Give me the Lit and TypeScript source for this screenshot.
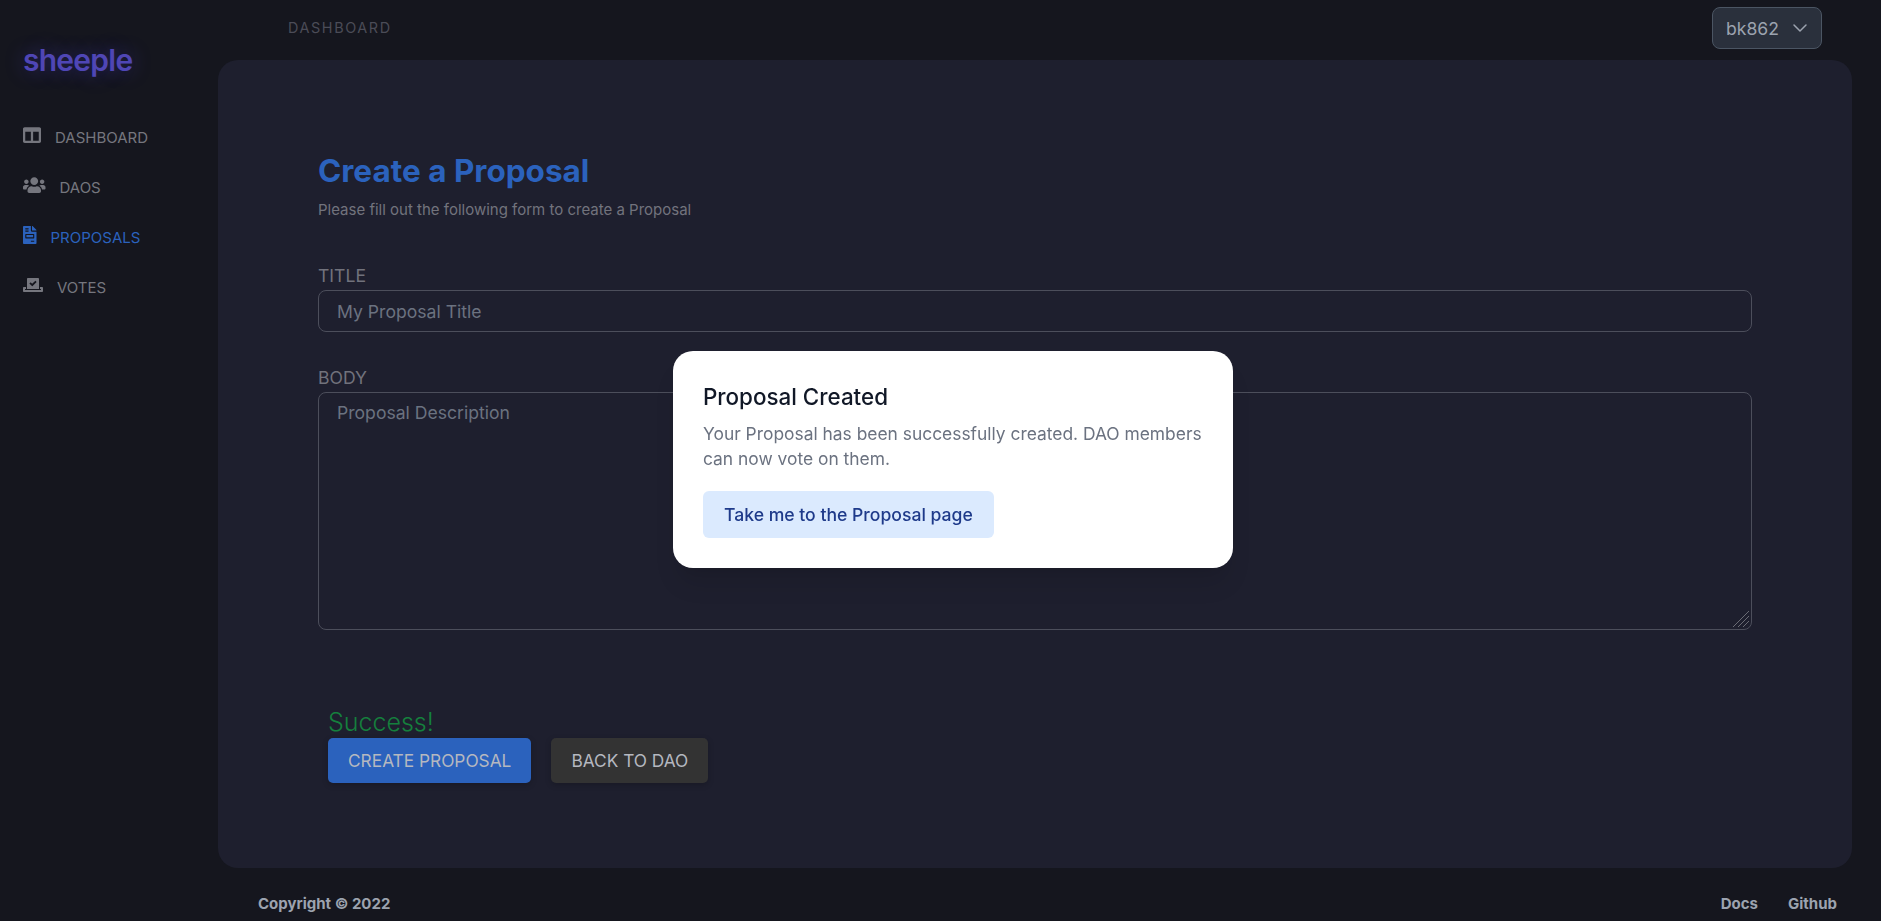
import { LitElement, html, css, svg } from 'lit';
import { customElement } from 'lit/decorators.js';

const ICONS = {
  columns: { box: '0 0 512 512', d: 'M464 32H48C21.49 32 0 53.49 0 80v352c0 26.51 21.49 48 48 48h416c26.51 0 48-21.49 48-48V80c0-26.51-21.49-48-48-48zM224 416H64V160h160v256zm224 0H288V160h160v256z' },
  users: { box: '0 0 640 512', d: 'M96 224c35.3 0 64-28.7 64-64s-28.7-64-64-64-64 28.7-64 64 28.7 64 64 64zm448 0c35.3 0 64-28.7 64-64s-28.7-64-64-64-64 28.7-64 64 28.7 64 64 64zm32 32h-64c-17.6 0-33.5 7.1-45.1 18.6 40.3 22.1 68.9 62 75.1 109.4h66c17.7 0 32-14.3 32-32v-32c0-35.3-28.7-64-64-64zm-256 0c61.9 0 112-50.1 112-112S381.9 32 320 32 208 82.1 208 144s50.1 112 112 112zm76.8 32h-8.3c-20.8 10-43.9 16-68.5 16s-47.6-6-68.5-16h-8.3C179.6 288 128 339.6 128 403.2V432c0 26.5 21.5 48 48 48h288c26.5 0 48-21.5 48-48v-28.8c0-63.6-51.6-115.2-115.2-115.2zm-223.7-13.4C161.5 263.1 145.6 256 128 256H64c-35.3 0-64 28.7-64 64v32c0 17.7 14.3 32 32 32h65.9c6.3-47.4 34.9-87.3 75.2-109.4z' },
  invoice: { box: '0 0 384 512', d: 'M288 256H96v64h192v-64zm89-151L279.1 7c-4.5-4.5-10.6-7-17-7H256v128h128v-6.1c0-6.3-2.5-12.4-7-16.9zm-153 31V0H24C10.7 0 0 10.7 0 24v464c0 13.3 10.7 24 24 24h336c13.3 0 24-10.7 24-24V160H248c-13.2 0-24-10.8-24-24zM64 72c0-4.42 3.58-8 8-8h80c4.42 0 8 3.58 8 8v16c0 4.42-3.58 8-8 8H72c-4.42 0-8-3.58-8-8V72zm0 64c0-4.42 3.58-8 8-8h80c4.42 0 8 3.58 8 8v16c0 4.42-3.58 8-8 8H72c-4.42 0-8-3.58-8-8v-16zm256 304c0 4.42-3.58 8-8 8h-80c-4.42 0-8-3.58-8-8v-16c0-4.42 3.58-8 8-8h80c4.42 0 8 3.58 8 8v16zm0-200v96c0 8.84-7.16 16-16 16H80c-8.84 0-16-7.16-16-16v-96c0-8.84 7.16-16 16-16h224c8.84 0 16 7.16 16 16z' },
  vote: { box: '0 0 640 512', d: 'M608 320h-64v64h22.4c5.3 0 9.6 3.6 9.6 8v16c0 4.4-4.3 8-9.6 8H73.6c-5.3 0-9.6-3.6-9.6-8v-16c0-4.4 4.3-8 9.6-8H96v-64H32c-17.7 0-32 14.3-32 32v96c0 17.7 14.3 32 32 32h576c17.7 0 32-14.3 32-32v-96c0-17.7-14.3-32-32-32zm-96 64V64.3c0-17.9-14.5-32.3-32.3-32.3H160.4C142.5 32 128 46.5 128 64.3V384h384zM211.2 202l25.5-25.3c4.2-4.2 11-4.2 15.2.1l41.3 41.6 95.2-94.4c4.2-4.2 11-4.2 15.2.1l25.3 25.5c4.2 4.2 4.2 11-.1 15.2L300.5 292c-4.2 4.2-11 4.2-15.2-.1l-74.1-74.7c-4.2-4.3-4.2-11.1 0-15.2z' },
};

const NAV: { label: string; icon: keyof typeof ICONS; size: number; active?: boolean }[] = [
  { label: 'Dashboard', icon: 'columns', size: 18 },
  { label: 'DAOs', icon: 'users', size: 18 },
  { label: 'Proposals', icon: 'invoice', size: 18, active: true },
  { label: 'Votes', icon: 'vote', size: 16 },
];

@customElement('app-root')
export class AppRoot extends LitElement {
  static styles = css`
    :host {
      display: block;
      height: 921px;
      overflow: hidden;
      background: #15161e;
      font-family: Inter, 'Noto Sans', sans-serif;
    }

    * {
      box-sizing: border-box;
    }

    .layout {
      display: grid;
      grid-template-columns: 218px 1fr;
      height: 921px;
    }

    .sidebar {
      padding: 40px 0 0 23px;
    }

    .logo {
      font-size: 30px;
      line-height: 40px;
      font-weight: 600;
      letter-spacing: -0.75px;
      color: #4f46b5;
      text-shadow: 0 0 20px rgba(79, 70, 229, 0.4);
      margin-bottom: 45px;
    }

    .nav {
      display: flex;
      flex-direction: column;
      gap: 26px;
    }

    .nav-item {
      display: flex;
      align-items: center;
      gap: 14px;
      height: 24px;
      font-size: 15px;
      text-transform: uppercase;
      color: #75767e;
    }

    .nav-item.active {
      color: #2b62bd;
    }

    .nav-item svg {
      fill: currentColor;
      display: block;
      flex: none;
      margin-top: -4px;
    }

    .main {
      display: flex;
      flex-direction: column;
      min-width: 0;
      padding-right: 29px;
    }

    .topbar {
      height: 60px;
      flex: none;
      display: flex;
      align-items: flex-start;
      justify-content: space-between;
      padding: 7px 30px 0 70px;
    }

    .crumb {
      font-size: 14.4px;
      line-height: 42px;
      letter-spacing: 1.6px;
      color: #4b4c57;
    }

    .account {
      width: 110px;
      height: 42px;
      display: flex;
      align-items: center;
      justify-content: space-between;
      padding: 0 9px 0 13px;
      background: #2a303c;
      border: 1px solid #4b5563;
      border-radius: 8px;
      font-size: 17.6px;
      color: #9ca3af;
    }

    .account svg {
      display: block;
      fill: none;
      stroke: #9ca3af;
      stroke-width: 1.5;
      stroke-linecap: round;
      stroke-linejoin: round;
    }

    .panel {
      flex: none;
      height: 808px;
      background: #1e1f2e;
      border-radius: 20px;
      padding: 91px 100px 0;
    }

    h1 {
      margin: 0;
      font-size: 31.5px;
      line-height: 40px;
      font-weight: 700;
      color: #2b62bd;
    }

    .sub {
      margin: 9px 0 0;
      font-size: 15px;
      line-height: 20px;
      color: #72737d;
    }

    .field {
      display: flex;
      flex-direction: column;
    }

    .field-title {
      margin-top: 42px;
    }

    .field-body {
      margin-top: 32px;
    }

    label {
      font-size: 17.6px;
      line-height: 28px;
      text-transform: uppercase;
      color: #71727c;
    }

    input,
    textarea {
      width: 100%;
      display: block;
      background: transparent;
      border: 1px solid #4c4e5b;
      border-radius: 8px;
      padding: 0 18px;
      font: 17.6px/24px Inter, 'Noto Sans', sans-serif;
      color: #9ca3af;
      outline: none;
    }

    input {
      height: 42px;
    }

    .area {
      position: relative;
    }

    textarea {
      height: 238px;
      padding-top: 8px;
      padding-bottom: 8px;
      resize: none;
    }

    .grip {
      position: absolute;
      right: 2px;
      bottom: 2px;
      display: block;
      stroke: #6a6b74;
      stroke-width: 1;
    }

    input::placeholder,
    textarea::placeholder {
      color: #6b7280;
      opacity: 1;
    }

    .actions {
      margin: 76px 0 0 10px;
    }

    .success {
      font-size: 25px;
      line-height: 32px;
      font-weight: 300;
      color: #15803d;
    }

    .buttons {
      display: flex;
      gap: 20px;
    }

    button {
      border: 0;
      font-family: inherit;
      cursor: pointer;
    }

    .btn {
      height: 45px;
      padding: 0 20px;
      border-radius: 5px;
      font-size: 17.3px;
      text-transform: uppercase;
      color: #b5b8c0;
      box-shadow: 0 2px 6px rgba(0, 0, 0, 0.2);
    }

    .btn-primary {
      background: #2b62bd;
    }

    .btn-dark {
      background: #333333;
    }

    .footer {
      flex: 1;
      display: flex;
      align-items: center;
      justify-content: space-between;
      padding: 17px 15px 0 40px;
      font-size: 15px;
      font-weight: 700;
      color: #9ca3af;
    }

    .footer-links {
      display: flex;
      gap: 30px;
    }

    .modal {
      position: fixed;
      left: 673px;
      top: 351px;
      width: 560px;
      height: 217px;
      background: #fff;
      border-radius: 20px;
      padding: 30px;
      box-shadow: 0 20px 25px -5px rgba(0, 0, 0, 0.1), 0 10px 10px -5px rgba(0, 0, 0, 0.04);
    }

    .modal h2 {
      margin: 0;
      font-size: 22.4px;
      line-height: 32px;
      font-weight: 500;
      color: #111827;
    }

    .modal p {
      margin: 8px 0 0;
      font-size: 17.4px;
      line-height: 25px;
      color: #6b7280;
    }

    .modal button {
      margin-top: 20px;
      height: 47px;
      padding: 0 21px;
      border-radius: 6px;
      background: #dbeafe;
      color: #1e3a8a;
      font-size: 17.6px;
      font-weight: 500;
    }
  `;

  private renderIcon(name: keyof typeof ICONS, size: number) {
    const icon = ICONS[name];
    const [, , w, h] = icon.box.split(' ').map(Number);
    return html`<svg width=${(size * w) / h} height=${size} viewBox=${icon.box}>${svg`<path d=${icon.d}></path>`}</svg>`;
  }

  render() {
    return html`
      <div class="layout">
        <aside class="sidebar">
          <div class="logo">sheeple</div>
          <nav class="nav">
            ${NAV.map(
              (item) => html`
                <div class="nav-item ${item.active ? 'active' : ''}">
                  ${this.renderIcon(item.icon, item.size)}
                  <span>${item.label}</span>
                </div>
              `
            )}
          </nav>
        </aside>
        <div class="main">
          <header class="topbar">
            <span class="crumb">DASHBOARD</span>
            <div class="account">
              <span>bk862</span>
              <svg width="24" height="24" viewBox="0 0 24 24"><path d="M6 9l6 6 6-6"></path></svg>
            </div>
          </header>
          <section class="panel">
            <h1>Create a Proposal</h1>
            <p class="sub">Please fill out the following form to create a Proposal</p>
            <div class="field field-title">
              <label>Title</label>
              <input placeholder="My Proposal Title" />
            </div>
            <div class="field field-body">
              <label>Body</label>
              <div class="area">
                <textarea placeholder="Proposal Description"></textarea>
                <svg class="grip" width="18" height="18" viewBox="0 0 18 18">
                  <path d="M1 17L17 1M6 17L17 6M11 17L17 11"></path>
                </svg>
              </div>
            </div>
            <div class="actions">
              <div class="success">Success!</div>
              <div class="buttons">
                <button class="btn btn-primary">Create Proposal</button>
                <button class="btn btn-dark">Back to DAO</button>
              </div>
            </div>
          </section>
          <footer class="footer">
            <span>Copyright © 2022</span>
            <div class="footer-links"><span>Docs</span><span>Github</span></div>
          </footer>
        </div>
      </div>
      <div class="modal">
        <h2>Proposal Created</h2>
        <p>Your Proposal has been successfully created. DAO members can now vote on them.</p>
        <button>Take me to the Proposal page</button>
      </div>
    `;
  }
}
